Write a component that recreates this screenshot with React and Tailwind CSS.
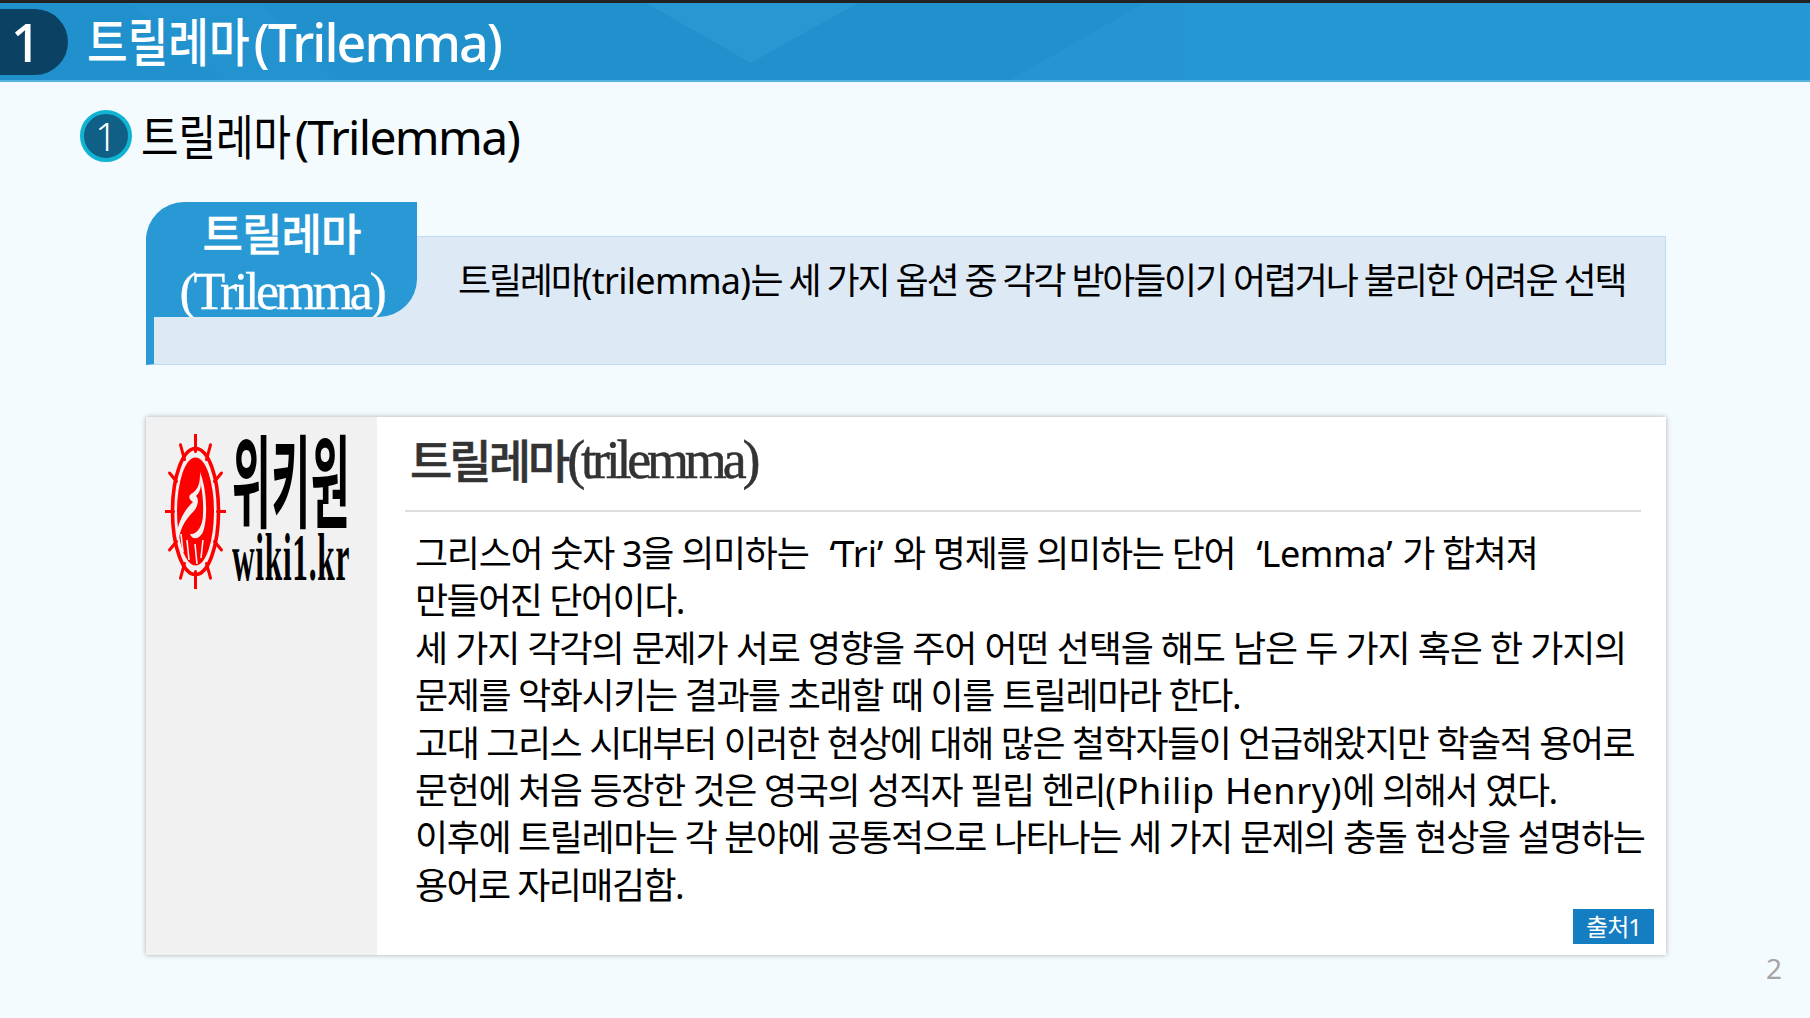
import React from "react";

const Sun = () => {
  const spikes = Array.from({ length: 12 }, (_, i) => (i * Math.PI) / 6);
  return (
    <svg width="61" height="155" viewBox="0 0 61 155" className="shrink-0">
      {spikes.map((a) => {
        const s = Math.sin(a), c = Math.cos(a);
        return (
          <line key={a} x1={30.5 + s * 22} y1={77.5 - c * 60} x2={30.5 + s * 30} y2={77.5 - c * 77} stroke="#f00" strokeWidth="3" strokeLinecap="round" />
        );
      })}
      <ellipse cx="30.5" cy="77.5" rx="23" ry="63" fill="none" stroke="#f00" strokeWidth="3.6" />
      <ellipse cx="30.5" cy="77.5" rx="18.5" ry="54" fill="#f00" />
      <path d="M35 38 C42 55 43 85 38 98 C34 106 27 106 25 100 C32 101 38 92 38 80 C39 60 35 52 35 38 Z" fill="#f1f1f1" />
      <path d="M35 40 C35 50 33 56 26 60 C22 63 26 67 28 68 C24 72 18 78 14 90 C12 96 12 100 14 104 C16 92 22 84 28 78 C32 74 35 66 31 62 C36 58 37 50 35 40 Z" fill="#f1f1f1" />
      <path d="M22 106 L24 126 M30 110 L32 130 M38 106 L36 124 M16 100 L18 118" stroke="#f1f1f1" strokeWidth="1.6" fill="none" />
    </svg>
  );
};

const Q = ({ side, children }) => (
  <span className={side === "l" ? "pl-[13px]" : "pr-[11px]"}>{children}</span>
);

const sans = { fontFamily: '"Noto Sans", "Noto Sans CJK KR", sans-serif' };
const serif = { fontFamily: '"Liberation Serif", "Noto Sans CJK KR", serif' };

export default function App() {
  return (
    <div className="w-[1810px] h-[1018px] overflow-hidden bg-[#f4fbff] flex flex-col relative" style={sans}>
      <div className="h-[3px] bg-[#222222]" />
      <header className="h-[79px] bg-[#2597d2] border-b-2 border-[#55b3e0] flex items-center relative overflow-hidden">
        <svg width="1810" height="77" viewBox="0 0 1810 77" className="absolute left-0 top-0">
          <polygon points="0,0 1145,0 1010,77 0,77" fill="#2091cc" />
          <polygon points="130,0 260,0 340,77 220,77" fill="#2293ce" />
          <polygon points="646,0 858,0 751,60" fill="#2898d3" />
          <polygon points="1145,0 1185,0 1185,77 1010,77" fill="#2595d1" />
        </svg>
        <div className="relative w-[68px] h-[66px] bg-[#0b4263] rounded-r-[33px] flex items-center justify-center text-white text-[53px] font-medium pr-[16px] leading-none">1</div>
        <h1 className="relative ml-[19px] text-white text-[52px] leading-none whitespace-nowrap font-medium">
          <span className="inline-block origin-left scale-x-[0.85] mr-[-25px]">트릴레마</span>
          <span className="tracking-[-1.95px]">(Trilemma)</span>
        </h1>
      </header>
      <main className="flex flex-col pl-[80px] pr-[144px]">
        <div className="flex items-center mt-[24px] h-[60px]">
          <div className="w-[52px] h-[52px] rounded-full bg-[#0f5f87] border-[4px] border-[#10b4d2] text-white text-[38px] font-light flex items-center justify-center leading-none">1</div>
          <h2 className="ml-[9px] text-[48px] leading-none text-black whitespace-nowrap mt-[1px]">
            <span className="inline-block origin-left scale-x-[0.85] mr-[-23px]">트릴레마</span>
            <span className="tracking-[-1.7px]">(Trilemma)</span>
          </h2>
        </div>
        <section className="ml-[66px] mt-[36px] h-[163px] relative flex">
          <div className="mt-[34px] flex-1 flex border-[1px] border-[#bcdcf2] bg-[#dee9f6] border-l-[8px] border-l-[#2999d5] pl-[306px] pt-[19px]">
            <p className="text-[36px] leading-[50px] tracking-[-2.22px] text-black whitespace-nowrap -ml-[2px]">트릴레마<span className="tracking-[-0.7px]">(trilemma)</span>는 세 가지 옵션 중 각각 받아들이기 어렵거나 불리한 어려운 선택</p>
          </div>
          <div className="absolute left-0 top-0 w-[271px] h-[115px] bg-[#2999d5] rounded-tl-[38px] rounded-br-[38px] text-white text-center overflow-hidden" style={serif}>
            <div className="text-[44px] leading-[56px] mt-[7px] tracking-[-1px] font-medium [-webkit-text-stroke:0.3px_white]">트릴레마</div>
            <div className="text-[52px] leading-[56px] tracking-[-3.4px] -mt-[1px] [-webkit-text-stroke:0.3px_white]">(Trilemma)</div>
          </div>
        </section>
        <section className="ml-[66px] mt-[52px] h-[538px] bg-white flex shadow-[0_0_5px_rgba(0,0,0,0.3)] relative">
          <div className="w-[231px] bg-[#f1f1f1] flex items-start pt-[17px] pl-[19px]">
            <Sun />
            <div className="ml-[6px] flex flex-col">
              <span className="block h-[92px] text-[54px] leading-none font-semibold text-black origin-top-left scale-y-[1.88] scale-x-[0.78] whitespace-nowrap tracking-[1px] -mt-[8px]" style={{ fontFamily: '"Noto Sans CJK KR", sans-serif' }}>위키원</span>
              <span className="block mt-[5px] text-[42px] leading-none text-black origin-top-left scale-x-[0.745] scale-y-[1.62] whitespace-nowrap font-bold tracking-[1px]" style={{ fontFamily: '"Liberation Serif", serif' }}>wiki1.kr</span>
            </div>
          </div>
          <div className="flex-1 pl-[28px] pr-[26px] flex flex-col">
            <h3 className="pl-[5px] mt-[8px] h-[87px] text-[46px] leading-[70px] font-medium tracking-[-3px] text-[#333333] border-b-2 border-[#dddddd] w-[1236px] whitespace-nowrap [-webkit-text-stroke:0.5px_#333333]" style={serif}>
              <span>트릴레마</span><span className="text-[54px] tracking-[-4.2px]">(trilemma)</span>
            </h3>
            <div className="pl-[10px] pt-[18px] text-[36px] leading-[47.4px] tracking-[-1.4px] text-black whitespace-nowrap">
              <p className="tracking-[-1.3px]">그리스어 숫자 3을 의미하는 <Q side="l">‘</Q><span className="tracking-[0px]">Tri</span><Q side="r">’</Q>와 명제를 의미하는 단어 <Q side="l">‘</Q><span className="tracking-[-0.4px]">Lemma</span><Q side="r">’</Q>가 합쳐져</p>
              <p className="tracking-[-1.5px]">만들어진 단어이다.</p>
              <p className="tracking-[-1.13px]">세 가지 각각의 문제가 서로 영향을 주어 어떤 선택을 해도 남은 두 가지 혹은 한 가지의</p>
              <p>문제를 악화시키는 결과를 초래할 때 이를 트릴레마라 한다.</p>
              <p className="tracking-[-1.45px]">고대 그리스 시대부터 이러한 현상에 대해 많은 철학자들이 언급해왔지만 학술적 용어로</p>
              <p>문헌에 처음 등장한 것은 영국의 성직자 필립 헨리<span className="tracking-[0.7px]">(Philip Henry)</span>에 의해서 였다.</p>
              <p>이후에 트릴레마는 각 분야에 공통적으로 나타나는 세 가지 문제의 충돌 현상을 설명하는</p>
              <p className="tracking-[-1.6px]">용어로 자리매김함.</p>
            </div>
          </div>
          <div className="absolute right-[12px] bottom-[11px] w-[81px] h-[35px] bg-[#157dc1] text-white text-[24px] leading-[35px] text-center tracking-[-1px]">출처1</div>
        </section>
      </main>
      <div className="absolute left-[1766px] top-[949px] text-[28px] leading-[38px] text-[#a5a5a5]">2</div>
    </div>
  );
}
